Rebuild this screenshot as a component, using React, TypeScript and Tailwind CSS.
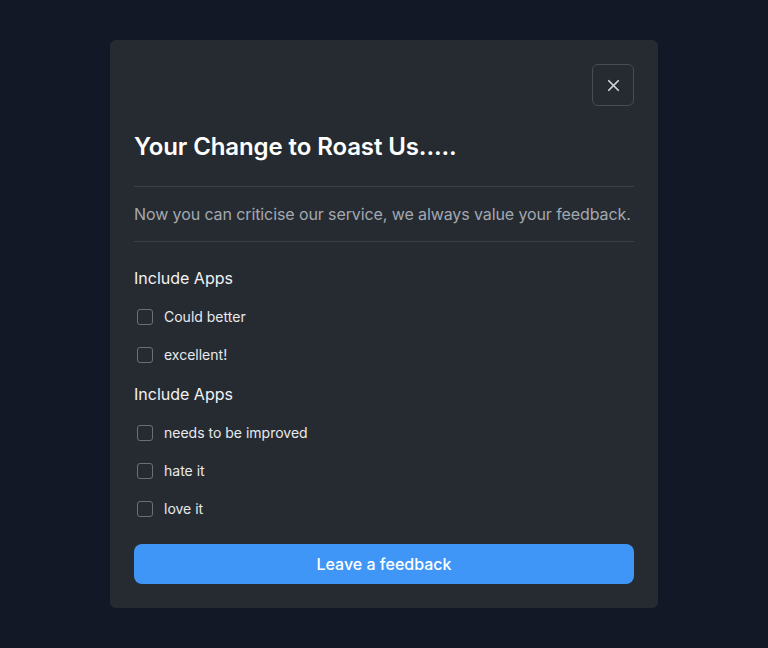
import React, { useState } from 'react';
import { X } from 'lucide-react';

const groups = [
  { title: 'Include Apps', options: ['Could better', 'excellent!'] },
  { title: 'Include Apps', options: ['needs to be improved', 'hate it', 'love it'] },
];

function Option({ label }: { label: string }) {
  const [checked, setChecked] = useState(false);
  return (
    <label className="flex h-[38px] cursor-pointer items-center gap-[11px] pl-[3px]">
      <input
        type="checkbox"
        checked={checked}
        onChange={() => setChecked(!checked)}
        className="h-4 w-4 appearance-none rounded-[3px] border-[1.5px] border-[#6b7077] bg-transparent checked:bg-[#4096f6]"
      />
      <span className="text-sm text-[#e8eaed]">{label}</span>
    </label>
  );
}

export default function App() {
  return (
    <div
      className="flex min-h-[648px] w-full items-start justify-center bg-[#121826] pt-10"
      style={{ fontFamily: 'Inter, "Noto Sans", sans-serif' }}
    >
      <div className="w-[548px] rounded-md bg-[#262b32] p-6">
        {/* Close */}
        <div className="flex justify-end">
          <button className="flex h-[42px] w-[42px] items-center justify-center rounded-md border border-[#484d55] text-[#d0d3d8]">
            <X size={19} strokeWidth={2.2} />
          </button>
        </div>

        <h2 className="mt-6 pt-px text-2xl font-semibold leading-8 tracking-[-0.1px] text-white">
          Your Change to Roast Us.....
        </h2>

        <div className="mt-[23px] h-px bg-[#3b4048]" />
        <p className="whitespace-nowrap py-[15px] text-base leading-6 tracking-[-0.1px] text-[#a3a8b0]">
          Now you can criticise our service, we always value your feedback.
        </p>
        <div className="h-px bg-[#3b4048]" />

        <div className="mt-6 flex flex-col gap-2">
          {groups.map((g, i) => (
            <div key={i}>
              <h3 className="text-base font-normal leading-6 text-[#f1f2f4]">{g.title}</h3>
              <div className="mt-2 flex flex-col">
                {g.options.map((o) => (
                  <Option key={o} label={o} />
                ))}
              </div>
            </div>
          ))}
        </div>

        <button className="mt-4 h-10 w-full rounded-lg bg-[#4096f6] text-base font-medium text-white">
          Leave a feedback
        </button>
      </div>
    </div>
  );
}
